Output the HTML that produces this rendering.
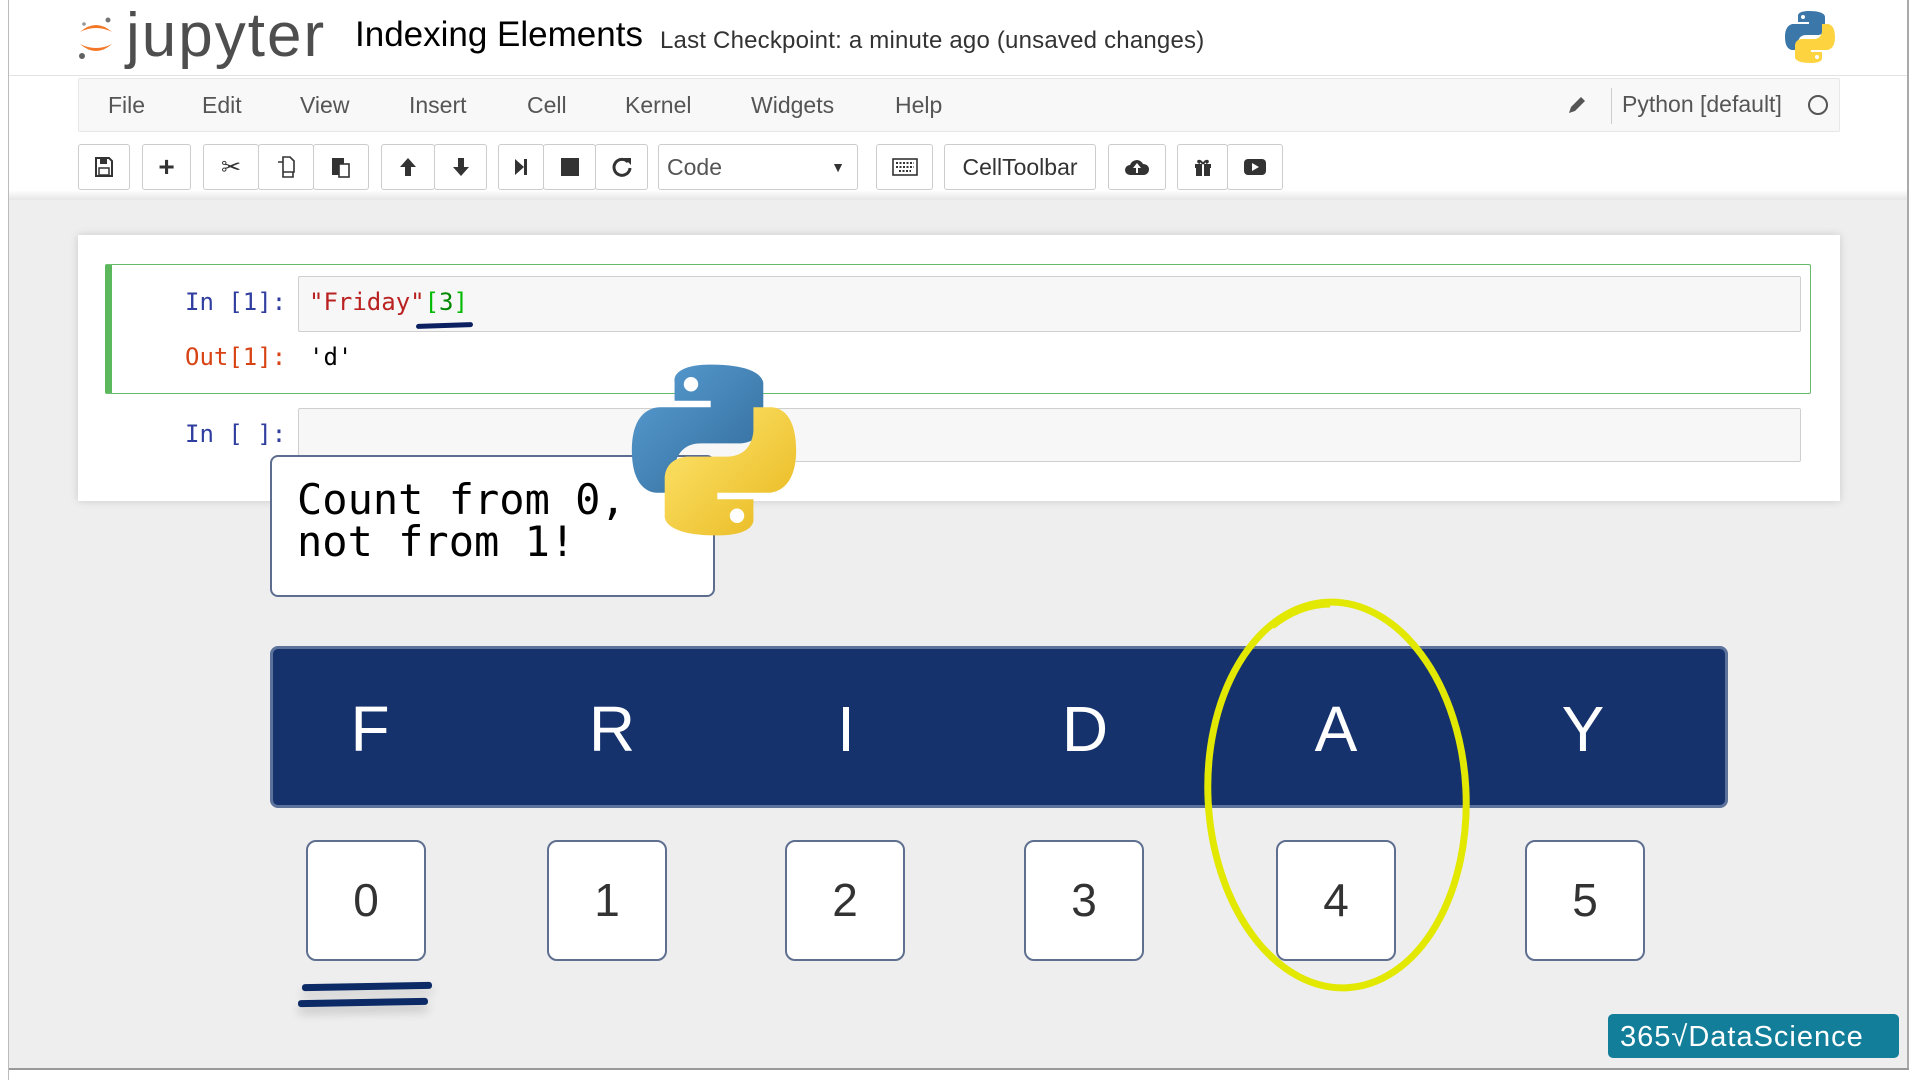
<!DOCTYPE html>
<html><head><meta charset="utf-8"><style>
*{margin:0;padding:0;box-sizing:border-box}
body{width:1920px;height:1080px;overflow:hidden;background:#fff;font-family:"Liberation Sans",sans-serif;position:relative}
.a{position:absolute}
.mono{font-family:"DejaVu Sans Mono","Liberation Mono",monospace}
.btn{position:absolute;top:144px;height:46px;background:#fff;border:1px solid #ccc;border-radius:3px;display:flex;align-items:center;justify-content:center;color:#333;font-size:22px}
.menu{position:absolute;top:92px;font-size:23px;color:#555}
.letter{position:absolute;top:692px;width:120px;margin-left:-60px;text-align:center;color:#fff;font-size:64px}
.num{position:absolute;top:840px;width:120px;height:121px;margin-left:-60px;background:#fff;border:2px solid #5f6f90;border-radius:10px;text-align:center;line-height:117px;font-size:46px;color:#333}
</style></head><body>
<div class="a" style="left:0;top:0;width:9px;height:1080px;background:#fff;border-right:1px solid #bbb"></div>
<div class="a" style="left:9px;top:198px;width:1899px;height:871px;background:#eee"></div>
<div class="a" style="left:1907px;top:0;width:2px;height:1070px;background:#aaa"></div>
<div class="a" style="left:9px;top:1068px;width:1900px;height:2px;background:#999"></div>
<div class="a" style="left:9px;top:190px;width:1898px;height:10px;background:linear-gradient(#fff,#e6e6e6)"></div>

<svg class="a" style="left:76px;top:12px" width="40" height="48" viewBox="0 0 40 48">
<path d="M4 20 Q20 6 36 20 Q20 12 4 20Z" fill="#f37726"/>
<path d="M4 32 Q20 46 36 32 Q20 40 4 32Z" fill="#f37726"/>
<circle cx="32" cy="8" r="2.5" fill="#767677"/><circle cx="6" cy="44" r="3" fill="#616262"/><circle cx="8" cy="12" r="1.8" fill="#989798"/>
</svg>
<div class="a" style="left:126px;top:0px;font-size:62px;color:#4e4e4e;letter-spacing:2px">jupyter</div>
<div class="a" style="left:355px;top:15px;font-size:35px;color:#000">Indexing Elements</div>
<div class="a" style="left:660px;top:27px;font-size:24px;color:#333;letter-spacing:0.2px">Last Checkpoint: a minute ago (unsaved changes)</div>
<svg class="a" style="left:1782px;top:9px" width="56" height="56" viewBox="0 0 56 56">
<path d="M27 2c-12 0-11 5-11 5v6h11v2H12S3 14 3 28s8 13 8 13h5v-7s0-8 8-8h12s7 0 7-7V8S44 2 27 2z" fill="#3b77a8"/>
<circle cx="21" cy="8" r="2" fill="#fff"/>
<path d="M29 54c12 0 11-5 11-5v-6H29v-2h15s9 1 9-13-8-13-8-13h-5v7s0 8-8 8H20s-7 0-7 7v11s-1 6 16 6z" fill="#fdd440"/>
<circle cx="35" cy="48" r="2" fill="#fff"/>
</svg>
<div class="a" style="left:9px;top:75px;width:1898px;height:1px;background:#e3e3e3"></div>

<div class="a" style="left:78px;top:78px;width:1762px;height:54px;background:#f8f8f8;border:1px solid #e7e7e7;border-radius:2px"></div>
<div class="menu" style="left:108px">File</div>
<div class="menu" style="left:202px">Edit</div>
<div class="menu" style="left:300px">View</div>
<div class="menu" style="left:409px">Insert</div>
<div class="menu" style="left:527px">Cell</div>
<div class="menu" style="left:625px">Kernel</div>
<div class="menu" style="left:751px">Widgets</div>
<div class="menu" style="left:895px">Help</div>
<svg class="a" style="left:1566px;top:94px" width="22" height="22" viewBox="0 0 22 22"><path d="M3 19l2-6L15 3l4 4L9 17z" fill="#555"/></svg>
<div class="a" style="left:1611px;top:88px;width:1px;height:36px;background:#ccc"></div>
<div class="menu" style="left:1622px;top:91px">Python [default]</div>
<div class="a" style="left:1808px;top:95px;width:20px;height:20px;border:2px solid #555;border-radius:50%"></div>

<div class="btn" style="left:78px;width:52px"><svg width="20" height="22" viewBox="0 0 20 22"><path d="M2 2h13l3 3v15H2z" fill="none" stroke="#333" stroke-width="2"/><rect x="6" y="3" width="7" height="5" fill="#333"/><rect x="5" y="12" width="10" height="7" fill="none" stroke="#333" stroke-width="1.5"/></svg></div>
<div class="btn" style="left:142px;width:49px;font-weight:bold;font-size:28px">+</div>
<div class="btn" style="left:203px;width:56px;font-size:24px">✂</div>
<div class="btn" style="left:258px;width:56px"><svg width="22" height="24" viewBox="0 0 22 24"><path d="M8 2h7l4 4v11H8z M3 7h5v15h10v-5" fill="none" stroke="#333" stroke-width="1.6"/></svg></div>
<div class="btn" style="left:313px;width:56px"><svg width="22" height="24" viewBox="0 0 22 24"><rect x="2" y="3" width="12" height="17" fill="#333"/><rect x="9" y="9" width="10" height="13" fill="#fff" stroke="#333" stroke-width="1.6"/></svg></div>
<div class="btn" style="left:381px;width:54px"><svg width="20" height="22" viewBox="0 0 20 22"><path d="M10 2L2 11h5v9h6v-9h5z" fill="#333"/></svg></div>
<div class="btn" style="left:434px;width:53px"><svg width="20" height="22" viewBox="0 0 20 22"><path d="M10 20L2 11h5V2h6v9h5z" fill="#333"/></svg></div>
<div class="btn" style="left:498px;width:46px"><svg width="16" height="20" viewBox="0 0 16 20"><path d="M2 2l9 8-9 8z" fill="#333"/><rect x="11" y="2" width="3" height="16" fill="#333"/></svg></div>
<div class="btn" style="left:543px;width:53px"><div style="width:18px;height:18px;background:#333"></div></div>
<div class="btn" style="left:595px;width:53px"><svg width="22" height="22" viewBox="0 0 22 22"><path d="M17 6A8 8 0 1 0 19 12" fill="none" stroke="#333" stroke-width="3"/><path d="M13 2h7v7z" fill="#333"/></svg></div>
<div class="btn" style="left:658px;width:200px;justify-content:flex-start;padding-left:8px;font-size:23px;color:#555">Code<span style="position:absolute;right:12px;font-size:14px;color:#333">▼</span></div>
<div class="btn" style="left:876px;width:57px"><svg width="26" height="18" viewBox="0 0 26 18"><rect x="1" y="1" width="24" height="16" fill="none" stroke="#333" stroke-width="1.6"/><path d="M4 5h18M4 9h18M7 13h12" stroke="#333" stroke-width="2" stroke-dasharray="2 1.5"/></svg></div>
<div class="btn" style="left:944px;width:152px;font-size:23px">CellToolbar</div>
<div class="btn" style="left:1108px;width:58px"><svg width="26" height="20" viewBox="0 0 26 20"><path d="M6 18a5 5 0 0 1 0-10 7 7 0 0 1 13-1 5.5 5.5 0 0 1 1 11z" fill="#333"/><path d="M13 6l-4 5h3v5h2v-5h3z" fill="#fff"/></svg></div>
<div class="btn" style="left:1177px;width:51px"><svg width="20" height="22" viewBox="0 0 20 22"><rect x="2" y="8" width="16" height="4" fill="#333"/><rect x="3" y="12" width="14" height="8" fill="#333"/><rect x="9" y="8" width="2" height="12" fill="#fff"/><path d="M10 8C6 2 3 6 7 7M10 8c4-6 7-2 3-1" fill="none" stroke="#333" stroke-width="2"/></svg></div>
<div class="btn" style="left:1227px;width:56px"><svg width="24" height="20" viewBox="0 0 24 20"><rect x="1" y="2" width="22" height="16" rx="4" fill="#333"/><path d="M9 6l7 4-7 4z" fill="#fff"/></svg></div>

<div class="a" style="left:78px;top:235px;width:1762px;height:266px;background:#fff;box-shadow:0 0 8px rgba(0,0,0,.15)"></div>
<div class="a" style="left:105px;top:264px;width:1706px;height:130px;border:1px solid #66bb6a;border-left:7px solid #5cb85c;border-radius:2px"></div>
<div class="a mono" style="left:185px;top:288px;font-size:24px;color:#303f9f">In [1]:</div>
<div class="a" style="left:298px;top:276px;width:1503px;height:56px;background:#f7f7f7;border:1px solid #cfcfcf;border-radius:2px"></div>
<div class="a mono" style="left:309px;top:288px;font-size:24px;color:#ba2121">"Friday"<span style="color:#0b0">[</span><span style="color:#080">3</span><span style="color:#0b0">]</span></div>
<div class="a" style="left:416px;top:323px;width:57px;height:5px;background:#0b2060;border-radius:3px;transform:rotate(-2deg)"></div>
<div class="a mono" style="left:185px;top:343px;font-size:24px;color:#d84315">Out[1]:</div>
<div class="a mono" style="left:309px;top:343px;font-size:24px;color:#000">'d'</div>
<div class="a mono" style="left:185px;top:420px;font-size:24px;color:#303f9f">In [ ]:</div>
<div class="a" style="left:298px;top:408px;width:1503px;height:54px;background:#f7f7f7;border:1px solid #cfcfcf;border-radius:2px"></div>

<div class="a" style="left:270px;top:455px;width:445px;height:142px;background:#fff;border:2px solid #5d6d8f;border-radius:8px"></div>
<div class="a mono" style="left:297px;top:479px;font-size:42px;line-height:42px;color:#000;white-space:pre">Count from 0,
not from 1!</div>

<svg class="a" style="left:622px;top:358px" width="184" height="184" viewBox="0 0 56 56">
<defs><linearGradient id="b" x1="0" y1="0" x2="1" y2="1"><stop offset="0" stop-color="#5a9fd4"/><stop offset="1" stop-color="#306998"/></linearGradient>
<linearGradient id="y" x1="0" y1="0" x2="1" y2="1"><stop offset="0" stop-color="#ffe873"/><stop offset="1" stop-color="#e8b71c"/></linearGradient></defs>
<path d="M27 2c-12 0-11 5-11 5v6h11v2H12S3 14 3 28s8 13 8 13h5v-7s0-8 8-8h12s7 0 7-7V8S44 2 27 2z" fill="url(#b)"/>
<circle cx="21" cy="8" r="2.2" fill="#fff"/>
<path d="M29 54c12 0 11-5 11-5v-6H29v-2h15s9 1 9-13-8-13-8-13h-5v7s0 8-8 8H20s-7 0-7 7v11s-1 6 16 6z" fill="url(#y)"/>
<circle cx="35" cy="48" r="2.2" fill="#fff"/>
</svg>

<div class="a" style="left:270px;top:646px;width:1458px;height:162px;background:#15326d;border:3px solid #5d729b;border-radius:8px"></div>
<div class="letter" style="left:370px">F</div>
<div class="letter" style="left:612px">R</div>
<div class="letter" style="left:846px">I</div>
<div class="letter" style="left:1085px">D</div>
<div class="letter" style="left:1336px">A</div>
<div class="letter" style="left:1583px">Y</div>

<div class="num" style="left:366px">0</div>
<div class="num" style="left:607px">1</div>
<div class="num" style="left:845px">2</div>
<div class="num" style="left:1084px">3</div>
<div class="num" style="left:1336px">4</div>
<div class="num" style="left:1585px">5</div>

<div class="a" style="left:302px;top:983px;width:130px;height:7px;background:#0b2a66;border-radius:3px;transform:rotate(-1deg);box-shadow:0 6px 10px rgba(0,0,0,.15)"></div>
<div class="a" style="left:298px;top:999px;width:130px;height:7px;background:#0b2a66;border-radius:3px;transform:rotate(-1deg);box-shadow:0 6px 10px rgba(0,0,0,.2)"></div>

<svg class="a" style="left:1190px;top:590px" width="300" height="410" viewBox="0 0 300 410">
<ellipse cx="147" cy="205" rx="129" ry="193" fill="none" stroke="#e2e800" stroke-width="7" transform="rotate(-3 147 205)"/>
<path d="M82 36Q110 14 140 14" fill="none" stroke="#e2e800" stroke-width="7"/>
</svg>

<div class="a" style="left:1608px;top:1014px;width:291px;height:44px;background:#137e99;border-radius:5px;color:#fff;font-size:29px;line-height:46px;padding-left:12px;letter-spacing:1px">365<span>√</span>DataScience</div>
</body></html>
